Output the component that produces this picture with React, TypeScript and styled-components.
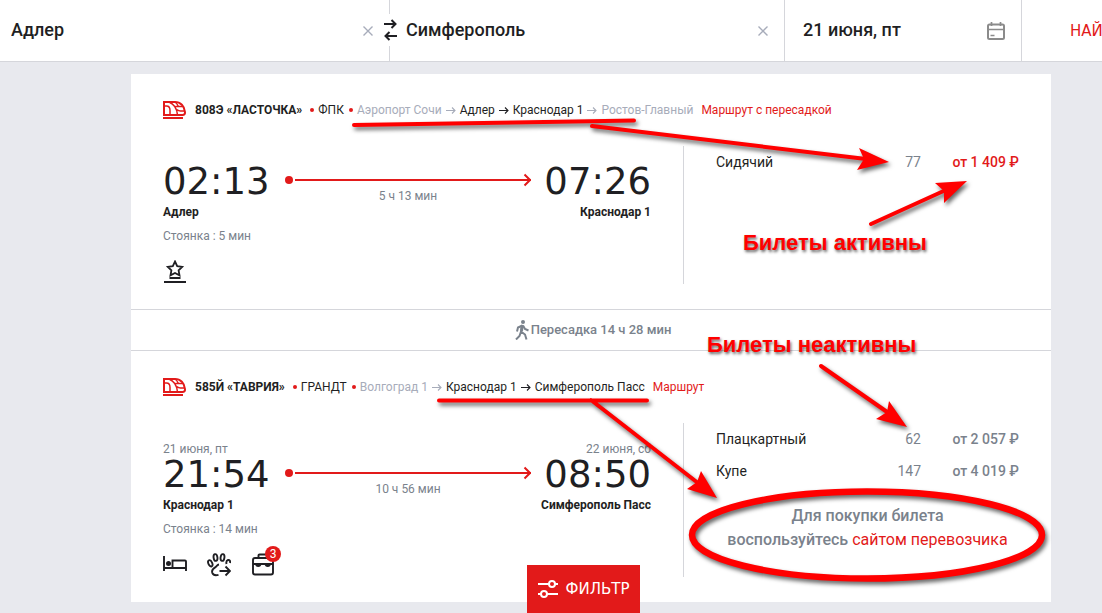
import React from "react";
import styled, { createGlobalStyle } from "styled-components";

const color = {
  red: "#e21a1a",
  ink: "#1f1f23",
  grey: "#7a828c",
  pale: "#a7acba",
  line: "#d5d6db",
  page: "#e8e9ee",
  mark: "#ff0000",
};

const GlobalStyle = createGlobalStyle`
  *, *::before, *::after { box-sizing: border-box; }
  body {
    margin: 0;
    background: ${color.page};
    color: ${color.ink};
    font: 12px/16px Roboto, "Liberation Sans", sans-serif;
  }
  button, input { font: inherit; color: inherit; }
  a { color: ${color.red}; text-decoration: none; }
`;

const Viewport = styled.div`
  overflow: hidden;
`;

/* The desktop layout keeps a minimum width and is cut off by narrower windows */
const Page = styled.div`
  min-width: 1182px;
  min-height: 100vh;
`;

const SearchBar = styled.form`
  display: grid;
  grid-template-columns: 390fr 395fr 237fr 160fr;
  height: 62px;
  background: #fff;
  border-bottom: 1px solid ${color.line};
`;

const Field = styled.div<{ $indent: number }>`
  position: relative;
  display: flex;
  align-items: center;
  min-width: 0;
  padding: 0 16px 0 ${(p) => p.$indent}px;
  border-right: 1px solid ${color.line};
`;

const FieldInput = styled.input`
  flex: 1;
  min-width: 0;
  padding: 0 0 2px;
  border: 0;
  outline: 0;
  background: none;
  font-size: 18px;
  line-height: 24px;
  font-weight: 500;
`;

const IconButton = styled.button`
  display: flex;
  padding: 0;
  border: 0;
  background: none;
  cursor: pointer;
`;

const SwapButton = styled(IconButton)`
  position: absolute;
  z-index: 1;
  right: -8px;
  top: 14px;
  height: 32px;
  align-items: center;
  background: #fff;
`;

const SearchButton = styled.button`
  padding: 0 0 0 48px;
  border: 0;
  background: none;
  color: ${color.red};
  font-family: "DejaVu Sans", sans-serif;
  font-size: 15px;
  text-align: left;
  cursor: pointer;
`;

const Results = styled.main`
  padding: 12px 0 8px;
`;

const Card = styled.article`
  position: relative;
  width: 920px;
  margin: 0 auto;
  background: #fff;
`;

const LegSection = styled.section`
  padding: 24px 32px 25px;
`;

const LegHeader = styled.header`
  display: flex;
  align-items: center;
  height: 24px;
  margin-bottom: 24px;
  gap: 8px;
  white-space: nowrap;
`;

const TrainTitle = styled.h2`
  display: flex;
  align-items: center;
  gap: 4px;
  margin: 0;
  font-size: 12px;
  font-weight: 400;
`;

const TrainName = styled.strong`
  margin-right: 3px;
  font-weight: 700;
`;

const Bullet = styled.span`
  width: 4px;
  height: 4px;
  margin-left: 1px;
  border-radius: 50%;
  background: ${color.red};
`;

const Stop = styled.span<{ $pale?: boolean }>`
  display: flex;
  color: ${(p) => (p.$pale ? color.pale : color.ink)};
`;

const LegBody = styled.div`
  display: grid;
  grid-template-columns: 1fr 336px;
  column-gap: 32px;
`;

const Journey = styled.div`
  padding-top: 18px;
`;

const Points = styled.div`
  display: grid;
  grid-template-columns: 114px 1fr 112px;
  column-gap: 8px;
  align-items: end;
`;

const Point = styled.div<{ $right?: boolean }>`
  display: flex;
  flex-direction: column;
  align-items: ${(p) => (p.$right ? "flex-end" : "flex-start")};
  white-space: nowrap;
`;

const Muted = styled.span`
  color: ${color.grey};
`;

const Time = styled.time`
  font-family: "DejaVu Sans", sans-serif;
  font-size: 37px;
  line-height: 36px;
`;

const Station = styled.strong`
  margin-top: 4px;
  font-weight: 700;
`;

const Track = styled.div`
  display: flex;
  flex-direction: column;
  align-items: center;
  padding-bottom: 16px;
  gap: 1px;
  color: ${color.red};
`;

const TrackLine = styled.div`
  display: flex;
  align-items: center;
  align-self: stretch;
  height: 14px;
`;

const TrackDot = styled.span`
  width: 8px;
  height: 8px;
  margin-right: 2px;
  border-radius: 50%;
  background: ${color.red};
`;

const TrackBar = styled.span`
  flex: 1;
  height: 2px;
  margin-right: -8px;
  background: ${color.red};
`;

const Halt = styled.p`
  margin: 8px 0 16px;
  color: ${color.grey};
`;

const Services = styled.div`
  display: flex;
  gap: 20px;
`;

const Service = styled.span`
  position: relative;
  display: flex;
  width: 24px;
  height: 24px;
`;

const Badge = styled.span`
  position: absolute;
  top: -7px;
  right: -6px;
  width: 16px;
  height: 16px;
  border-radius: 50%;
  background: ${color.red};
  color: #fff;
  text-align: center;
`;

const Offers = styled.div`
  padding-left: 32px;
  border-left: 1px solid ${color.line};
`;

const Fares = styled.table`
  width: 100%;
  border-collapse: collapse;
  font-size: 14px;
  line-height: 16px;
`;

const FareName = styled.th`
  height: 32px;
  padding: 0;
  font-weight: 400;
  text-align: left;
`;

const FareSeats = styled.td`
  padding: 0;
  color: ${color.grey};
  text-align: right;
`;

const FarePrice = styled.td<{ $active: boolean }>`
  width: 98px;
  padding: 0;
  color: ${(p) => (p.$active ? color.red : color.grey)};
  font-weight: 500;
  text-align: right;
  white-space: nowrap;
`;

const Notice = styled.p`
  margin: 17px 0 0;
  color: ${color.grey};
  font-size: 16px;
  line-height: 24px;
  font-weight: 500;
  text-align: center;

  a { font-weight: 400; }
`;

const Transfer = styled.div`
  display: flex;
  align-items: center;
  justify-content: center;
  gap: 2px;
  height: 42px;
  padding-left: 4px;
  border: solid ${color.line};
  border-width: 1px 0;
  color: ${color.grey};
  font-size: 13px;
  font-weight: 500;
`;

const FilterButton = styled.button`
  position: fixed;
  z-index: 3;
  left: 527px;
  bottom: 0;
  display: flex;
  align-items: center;
  justify-content: center;
  gap: 8px;
  width: 113px;
  height: 48px;
  padding: 0;
  border: 0;
  background: ${color.red};
  color: #fff;
  font-family: "DejaVu Sans", sans-serif;
  font-size: 15px;
  cursor: pointer;
`;

/* Hand-drawn marks lie over the card */
const Marks = styled.svg`
  position: absolute;
  z-index: 2;
  inset: 0;
  overflow: visible;
  pointer-events: none;
  filter: drop-shadow(2px 3px 2px rgba(0, 0, 0, 0.6));
`;

const MarkLabel = styled.span<{ $x: number; $y: number }>`
  position: absolute;
  z-index: 2;
  left: ${(p) => p.$x}px;
  top: ${(p) => p.$y}px;
  color: ${color.mark};
  font: bold 22px/24px "Liberation Sans", Arial, sans-serif;
  text-shadow: 1px 2px 3px rgba(0, 0, 0, 0.6);
  white-space: nowrap;
`;

const ClearIcon = () => (
  <svg width="10" height="10" viewBox="0 0 10 10" stroke={color.pale} strokeWidth="1.4" aria-hidden="true">
    <path d="M.5.5l9 9M9.5.5l-9 9" />
  </svg>
);

const SwapIcon = () => (
  <svg width="14" height="22" viewBox="0 0 14 22" fill="none" stroke={color.ink} strokeWidth="2" aria-hidden="true">
    <path d="M1 5h11.500M8.500 1l4 4-4 4M14 17H2.500M6.500 13l-4 4 4 4" />
  </svg>
);

const CalendarIcon = () => (
  <svg width="18" height="18" viewBox="0 0 18 18" fill="none" stroke="#8b8b8b" aria-hidden="true">
    <rect x="1" y="2.500" width="16" height="14.500" rx="1.500" strokeWidth="2" />
    <path d="M4.500 0v4M13.500 0v4M1 7.500h16M3.500 13.500h4" strokeWidth="1.700" />
  </svg>
);

const TrainIcon = () => (
  <svg width="24" height="18" viewBox="0 0 24 18" fill="none" stroke={color.red} strokeWidth="2" aria-hidden="true">
    <path d="M1 1h11c5.500 0 9.500 4 10 10 .2 2-.8 3-2.500 3H1z" />
    <path d="M1 5h2.500C6 5 7 7 7 9.500V14M6 1C11 3 14 7 14.500 14M12 1c1.500 1 2.500 2.500 3.500 4.500M12.500 5.500h7M22 10h-4.500c-1.500 0-2.500-.5-3.500-1.500" strokeWidth="1.500" />
    <path d="M0 17h20" />
  </svg>
);

const StarIcon = () => (
  <svg width="24" height="24" viewBox="0 0 24 24" fill="none" stroke={color.ink} strokeWidth="1.800" aria-hidden="true">
    <path d="M12 1.500l2.200 4.600 5 .7-3.600 3.500.9 5L12 12.900l-4.500 2.400.9-5L4.800 6.800l5-.7z" />
    <path d="M6.500 18h11M1 22h22" strokeWidth="2" />
  </svg>
);

const BedIcon = () => (
  <svg width="24" height="24" viewBox="0 0 24 24" fill="none" stroke={color.ink} strokeWidth="1.900" aria-hidden="true">
    <path d="M1 3v15M1 15h22M23 18V8.500a1 1 0 0 0-1-1H9.500V15" />
    <circle cx="5.500" cy="10.500" r="2.500" fill={color.ink} stroke="none" />
  </svg>
);

const PawIcon = () => (
  <svg width="24" height="24" viewBox="0 0 24 24" fill="none" stroke={color.ink} strokeWidth="1.900" aria-hidden="true">
    <ellipse cx="3.300" cy="10.300" rx="1.900" ry="3.300" transform="rotate(-24 3.300 10.300)" />
    <ellipse cx="8.500" cy="4.500" rx="1.900" ry="3.400" transform="rotate(-8 8.500 4.500)" />
    <ellipse cx="15.500" cy="4.500" rx="1.900" ry="3.400" transform="rotate(8 15.500 4.500)" />
    <path d="M19.500 11c-.4-1.800 0-3.600 1.500-4 1.600-.3 2.400 1 2 3M12 11.500c-1.700.2-2 1.500-3.500 2.700-2.300 1.300-4 3.300-3.200 5.600 1 2.600 3.700 2.700 6.200 2M12.500 18H23M18.500 13.500L23 18l-4.500 4.500" />
  </svg>
);

const CaseIcon = () => (
  <svg width="24" height="24" viewBox="0 0 24 24" fill="none" stroke={color.ink} strokeWidth="1.900" aria-hidden="true">
    <rect x="2" y="5" width="20" height="16.500" rx="2" />
    <path d="M7.500 5V2.500a1 1 0 0 1 1-1h7a1 1 0 0 1 1 1V5M2 11h20M5 11c.3 2.700 4.200 2.700 4.500 0M14.500 11c.3 2.700 4.200 2.700 4.500 0" />
  </svg>
);

const WalkIcon = () => (
  <svg width="14" height="20" viewBox="0 0 14 20" fill="none" stroke={color.grey} strokeWidth="2" aria-hidden="true">
    <circle cx="8" cy="2" r="2" fill={color.grey} stroke="none" />
    <path d="M7.500 5L6 11.500l4 3 1.500 5M6 11.500L4.500 16 1 19.500M7.500 5.500L3 7.500 2 11.500M8 5.500l2 3.500 3.500 1.500" />
    <path d="M7.200 5.500L6.500 11" strokeWidth="3" />
  </svg>
);

const FilterIcon = () => (
  <svg width="20" height="18" viewBox="0 0 20 18" fill="none" stroke="#fff" strokeWidth="2" aria-hidden="true">
    <path d="M0 4h11M17 4h3M0 14h3M9 14h11" />
    <circle cx="14" cy="4" r="3" />
    <circle cx="6" cy="14" r="3" />
  </svg>
);

const StopArrow = () => (
  <svg width="10" height="8" viewBox="0 0 10 8" fill="none" stroke="currentColor" strokeWidth="1.100" aria-hidden="true">
    <path d="M0 4.500h9M6 1.500l3 3-3 3" />
  </svg>
);

const TrackHead = () => (
  <svg width="8" height="14" viewBox="0 0 8 14" fill="none" stroke="currentColor" strokeWidth="2" aria-hidden="true">
    <path d="M1.500 1.500L7 7l-5.500 5.500" />
  </svg>
);

type Place = { date?: string; time: string; name: string };
type Leg = {
  train: string;
  carrier: string;
  stops: { name: string; pale?: boolean }[];
  link: string;
  from: Place;
  to: Place;
  duration: string;
  halt: string;
  services: { icon: React.ReactNode; badge?: number }[];
  fares: { name: string; seats: number; price: string }[];
  onSale: boolean;
};

const legs: Leg[] = [
  {
    train: "808Э «ЛАСТОЧКА»",
    carrier: "ФПК",
    stops: [
      { name: "Аэропорт Сочи", pale: true },
      { name: "Адлер" },
      { name: "Краснодар 1" },
      { name: "Ростов-Главный", pale: true },
    ],
    link: "Маршрут с пересадкой",
    from: { time: "02:13", name: "Адлер" },
    to: { time: "07:26", name: "Краснодар 1" },
    duration: "5 ч 13 мин",
    halt: "Стоянка : 5 мин",
    services: [{ icon: <StarIcon /> }],
    fares: [{ name: "Сидячий", seats: 77, price: "от 1 409 ₽" }],
    onSale: true,
  },
  {
    train: "585Й «ТАВРИЯ»",
    carrier: "ГРАНДТ",
    stops: [
      { name: "Волгоград 1", pale: true },
      { name: "Краснодар 1" },
      { name: "Симферополь Пасс" },
    ],
    link: "Маршрут",
    from: { date: "21 июня, пт", time: "21:54", name: "Краснодар 1" },
    to: { date: "22 июня, сб", time: "08:50", name: "Симферополь Пасс" },
    duration: "10 ч 56 мин",
    halt: "Стоянка : 14 мин",
    services: [{ icon: <BedIcon /> }, { icon: <PawIcon /> }, { icon: <CaseIcon />, badge: 3 }],
    fares: [
      { name: "Плацкартный", seats: 62, price: "от 2 057 ₽" },
      { name: "Купе", seats: 147, price: "от 4 019 ₽" },
    ],
    onSale: false,
  },
];

const PlaceView = ({ place, right }: { place: Place; right?: boolean }) => (
  <Point $right={right}>
    {place.date && <Muted>{place.date}</Muted>}
    <Time>{place.time}</Time>
    <Station>{place.name}</Station>
  </Point>
);

const LegView = ({ leg }: { leg: Leg }) => (
  <LegSection>
    <LegHeader>
      <TrainIcon />
      <TrainTitle>
        <TrainName>{leg.train}</TrainName>
        <Bullet />
        <span>{leg.carrier}</span>
        <Bullet />
        {leg.stops.map((stop, i) => (
          <React.Fragment key={stop.name}>
            {i > 0 && (
              <Stop $pale={stop.pale || leg.stops[i - 1].pale}>
                <StopArrow />
              </Stop>
            )}
            <Stop $pale={stop.pale}>{stop.name}</Stop>
          </React.Fragment>
        ))}
      </TrainTitle>
      <a href="#route">{leg.link}</a>
    </LegHeader>
    <LegBody>
      <Journey>
        <Points>
          <PlaceView place={leg.from} />
          <Track>
            <TrackLine>
              <TrackDot />
              <TrackBar />
              <TrackHead />
            </TrackLine>
            <Muted>{leg.duration}</Muted>
          </Track>
          <PlaceView place={leg.to} right />
        </Points>
        <Halt>{leg.halt}</Halt>
        <Services>
          {leg.services.map((service, i) => (
            <Service key={i}>
              {service.icon}
              {service.badge && <Badge>{service.badge}</Badge>}
            </Service>
          ))}
        </Services>
      </Journey>
      <Offers>
        <Fares>
          <tbody>
            {leg.fares.map((fare) => (
              <tr key={fare.name}>
                <FareName scope="row">{fare.name}</FareName>
                <FareSeats>{fare.seats}</FareSeats>
                <FarePrice $active={leg.onSale}>{fare.price}</FarePrice>
              </tr>
            ))}
          </tbody>
        </Fares>
        {!leg.onSale && (
          <Notice>
            Для покупки билета
            <br />
            воспользуйтесь <a href="#carrier">сайтом перевозчика</a>
          </Notice>
        )}
      </Offers>
    </LegBody>
  </LegSection>
);

export default function App() {
  return (
    <Viewport>
      <GlobalStyle />
      <Page>
        <SearchBar onSubmit={(e) => e.preventDefault()}>
          <Field $indent={11}>
            <FieldInput aria-label="Откуда" defaultValue="Адлер" />
            <IconButton type="button" aria-label="Очистить">
              <ClearIcon />
            </IconButton>
            <SwapButton type="button" aria-label="Поменять местами">
              <SwapIcon />
            </SwapButton>
          </Field>
          <Field $indent={16}>
            <FieldInput aria-label="Куда" defaultValue="Симферополь" />
            <IconButton type="button" aria-label="Очистить">
              <ClearIcon />
            </IconButton>
          </Field>
          <Field $indent={18}>
            <FieldInput aria-label="Дата" defaultValue="21 июня, пт" />
            <IconButton type="button" aria-label="Календарь">
              <CalendarIcon />
            </IconButton>
          </Field>
          <SearchButton>НАЙТИ</SearchButton>
        </SearchBar>
        <Results>
          <Card>
            <LegView leg={legs[0]} />
            <Transfer>
              <WalkIcon />
              Пересадка 14 ч 28 мин
            </Transfer>
            <LegView leg={legs[1]} />
            <Marks width="920" height="528" viewBox="131 74 920 528" fill={color.mark} aria-hidden="true">
              <g fill="none" stroke={color.mark} strokeWidth="4" strokeLinecap="round">
                <path d="M354 125L634 120.500M439 400.500H647M592 126L866 159M871 224L948 189M821 366L890 414M591 400L698 483" />
                <ellipse cx="867" cy="535" rx="175" ry="43.500" strokeWidth="6.500" />
              </g>
              <path d="M889 162L859 148 864 159 857 170zM967 181L935 183 944 191 944 203zM907 427L889 401 887 412 876 419zM717 498L701 471 697 482 687 489z" />
            </Marks>
            <MarkLabel $x={612} $y={157}>Билеты активны</MarkLabel>
            <MarkLabel $x={576} $y={259}>Билеты неактивны</MarkLabel>
          </Card>
        </Results>
        <FilterButton type="button">
          <FilterIcon />
          ФИЛЬТР
        </FilterButton>
      </Page>
    </Viewport>
  );
}
